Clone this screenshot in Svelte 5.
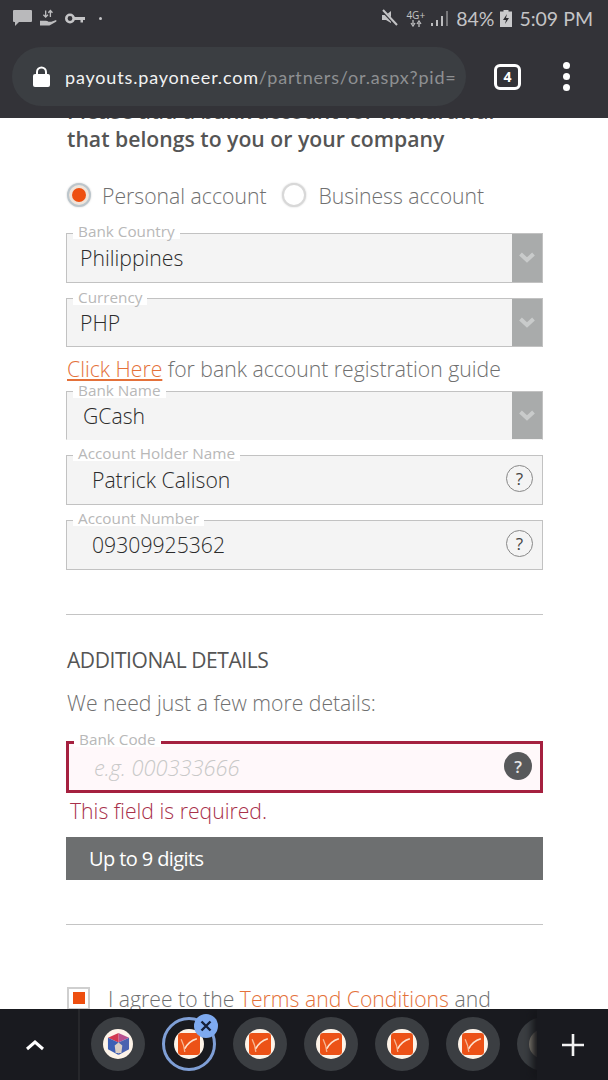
<script>
  const topFields = [
    { label: 'Bank Country', value: 'Philippines', cls: '' },
    { label: 'Currency', value: 'PHP', cls: 'short' }
  ];
  const lowerFields = [
    { label: 'Account Holder Name', value: 'Patrick Calison' },
    { label: 'Account Number', value: '09309925362' }
  ];
  const sideTabs = [0, 1, 2, 3];
</script>

{#snippet chevron()}
  <span class="chev">
    <svg width="18" height="12" viewBox="0 0 18 12"><path d="M2.5 2 L9 8 L15.5 2" fill="none" stroke="#c9cbcb" stroke-width="4"/></svg>
  </span>
{/snippet}

{#snippet payo()}
  <span class="fav">
    <svg width="22" height="22" viewBox="0 0 21 21">
      <rect width="21" height="21" rx="3" fill="#ec5217"/>
      <path d="M3 6 C5 10 6 13 6.5 18" fill="none" stroke="#f6b692" stroke-width="1.3"/>
      <path d="M6.5 15 C9 10 13 7 18 5.5" fill="none" stroke="#fde0cc" stroke-width="1.6"/>
    </svg>
  </span>
{/snippet}

<div class="app">
  <header class="top">
    <div class="status">
      <div class="st-left">
        <svg width="19" height="17" viewBox="0 0 19 17"><path d="M1 0 H18 Q19 0 19 1 V11 Q19 12 18 12 H6 L2 16 V12 H1 Q0 12 0 11 V1 Q0 0 1 0Z" fill="#b9b9bb"/></svg>
        <svg width="17" height="19" viewBox="0 0 18 19"><path d="M6 1 V8 M3.6 5.5 L6 8 L8.4 5.5 M11 8 V1 M8.8 3.4 L11 1 L13.2 3.4" fill="none" stroke="#bdbdbf" stroke-width="1.4"/><path d="M0 12 H6 Q8 12 9 13 H12 L17 11 Q18 12 17 13 L10 17 H0Z" fill="#bdbdbf"/></svg>
        <svg width="20" height="11" viewBox="0 0 20 11"><circle cx="5" cy="5.5" r="3.7" fill="none" stroke="#c4c4c6" stroke-width="2.6"/><path d="M8 4 H20 V7 H18 V9.5 H15.5 V7 H8Z" fill="#c4c4c6"/></svg>
        <span class="dot"></span>
      </div>
      <div class="st-right">
        <svg class="mute" width="18" height="18" viewBox="0 0 18 18"><path d="M2 6 H6 L11 2 V14 L6 11 H2Z" fill="#c4c4c6"/><path d="M2 1 L17 17" stroke="#333338" stroke-width="3"/><path d="M3 1 L17 16" stroke="#c4c4c6" stroke-width="2"/></svg>
        <span class="net">4G+<svg width="12" height="7" viewBox="0 0 12 7"><path d="M3 0 V4 M1 3 L3 6 L5 3 M9 7 V3 M7 4 L9 1 L11 4" stroke="#bdbdbf" stroke-width="1.3" fill="none"/></svg></span>
        <svg class="sig" width="18" height="16" viewBox="0 0 18 16"><path d="M0 13h2v3H0zM5 10h2v6H5zM10 6h2v10h-2z" fill="#bdbdbf"/><path d="M15 1h2v15h-2z" fill="#77777a"/></svg>
        <span class="pct">84%</span>
        <svg class="bat" width="12" height="17" viewBox="0 0 12 17"><path d="M3.5 0 H8.5 V1.5 H12 V17 H0 V1.5 H3.5Z" fill="#c9c9cb"/><path d="M7 4 L3 10 H6 L5 14 L9 8 H6Z" fill="#2c2c30"/></svg>
        <span class="time">5:09 PM</span>
      </div>
    </div>
    <div class="nav">
      <div class="url">
        <svg width="17" height="21" viewBox="0 0 17 21"><path d="M4 9 V6 a4.5 4.5 0 0 1 9 0 V9" fill="none" stroke="#fff" stroke-width="2"/><rect y="8" width="17" height="13" rx="2" fill="#fff"/></svg>
        <span class="addr"><b>payouts.payoneer.com</b>/partners/or.aspx?pid=</span>
      </div>
      <span class="count">4</span>
      <span class="menu"><i></i><i></i><i></i></span>
    </div>
  </header>

  <main class="page">
    <h2>Please add a bank account for withdrawal<br />that belongs to you or your company</h2>

    <div class="radios">
      <span class="radio on"><i></i></span><span class="rlabel">Personal account</span>
      <span class="radio"></span><span class="rlabel">Business account</span>
    </div>

    {#each topFields as f}
      <div class="field select {f.cls}">
        <span class="legend">{f.label}</span>
        <span class="value">{f.value}</span>
        {@render chevron()}
      </div>
    {/each}

    <p class="guide"><a href="#guide">Click Here</a> for bank account registration guide</p>

    <div class="field select noline">
      <span class="legend">Bank Name</span>
      <span class="value gcash">GCash</span>
      {@render chevron()}
    </div>

    {#each lowerFields as f}
      <div class="field">
        <span class="legend">{f.label}</span>
        <span class="value inset">{f.value}</span>
        <span class="help">?</span>
      </div>
    {/each}

    <hr class="rule-a" />

    <h3>ADDITIONAL DETAILS</h3>
    <p class="lead">We need just a few more details:</p>

    <div class="field error">
      <span class="legend">Bank Code</span>
      <span class="placeholder">e.g. 000333666</span>
      <span class="help solid">?</span>
    </div>
    <p class="errmsg">This field is required.</p>
    <div class="hint">Up to 9 digits</div>

    <hr class="rule-b" />

    <div class="agree">
      <span class="check"><i></i></span>
      <span>I agree to the <a href="#terms">Terms and Conditions</a> and</span>
    </div>
  </main>

  <footer class="tabs">
    <div class="up">
      <svg width="20" height="12" viewBox="0 0 20 12"><path d="M2 10 L10 3 L18 10" fill="none" stroke="#fff" stroke-width="3"/></svg>
    </div>
    <div class="strip">
      <span class="tab">
        <span class="fav-wrap">
          <svg width="23" height="24" viewBox="0 0 24 25">
            <path d="M12 1 L23 6 L12 11 Z" fill="#b8508f"/>
            <path d="M12 1 L1 6 L12 11 Z" fill="#d2384f"/>
            <path d="M1 6 L12 11 V24 L1 18Z" fill="#3d5fb5"/>
            <path d="M23 6 L12 11 V24 L23 18Z" fill="#4a62b0"/>
            <path d="M8 14 L12 11 L16 14 L15 22 H9Z" fill="#dccfc4"/>
          </svg>
        </span>
      </span>
      <span class="tab current">
        <span class="fav-wrap">{@render payo()}</span>
        <span class="close">
          <svg width="12" height="12" viewBox="0 0 12 12"><path d="M1.5 1.5 L10.5 10.5 M10.5 1.5 L1.5 10.5" stroke="#16213a" stroke-width="2.4"/></svg>
        </span>
      </span>
      {#each sideTabs as t}
        <span class="tab"><span class="fav-wrap">{@render payo()}</span></span>
      {/each}
      <span class="tab"><span class="fav-wrap muted"></span></span>
    </div>
    <div class="plus">
      <svg width="22" height="22" viewBox="0 0 22 22"><path d="M11 0 V22 M0 11 H22" stroke="#f2f2f2" stroke-width="2.6"/></svg>
    </div>
  </footer>
</div>

<style>
  :global(body) { margin: 0; background: #fff; }
  .app {
    width: 608px; height: 1080px; display: flex; flex-direction: column; overflow: hidden;
    font-family: "Open Sans", "Liberation Sans", sans-serif; color: #707070;
  }

  .top { height: 118px; flex: none; background: #333338; color: #c4c4c6; position: relative; z-index: 1; }
  .status { height: 36px; display: flex; justify-content: space-between; align-items: center; padding: 0 15px 0 13px; }
  .st-left { display: flex; align-items: center; gap: 8px; }
  .dot { width: 3px; height: 3px; border-radius: 50%; background: #c4c4c6; margin-left: 6px; }
  .st-right { display: flex; align-items: center; font-family: "Lato", sans-serif; }
  .net { display: flex; flex-direction: column; align-items: center; font-size: 10px; line-height: 10px; margin: 0 6px 0 8px; font-family: "Open Sans", sans-serif; }
  .pct { font-size: 19.5px; margin: 0 6px 0 7px; }
  .time { font-size: 19.5px; margin-left: 7px; }

  .nav { display: flex; align-items: center; padding: 11px 0 0 12px; }
  .url {
    width: 454px; height: 59px; box-sizing: border-box; border-radius: 30px; background: #3b3e42;
    display: flex; align-items: center; gap: 15px; padding-left: 21px;
  }
  .addr { font-family: "Lato", sans-serif; font-size: 18px; letter-spacing: 0.83px; color: #8e9092; white-space: nowrap; }
  .addr b { font-weight: 400; color: #f2f2f2; }
  .count {
    width: 27px; height: 26px; box-sizing: border-box; margin-left: 28px; border: 3px solid #fff; border-radius: 6px;
    display: flex; align-items: center; justify-content: center; color: #fff; font-size: 14px; font-weight: 700;
  }
  .menu { display: flex; flex-direction: column; gap: 4px; margin-left: 42px; }
  .menu i { width: 7px; height: 7px; border-radius: 50%; background: #fff; }

  .page { flex: 1; min-height: 0; overflow: hidden; padding: 0 65px 0 66px; font-weight: 300; }
  h2 { margin: -21px 0 0 1px; font-size: 21.2px; line-height: 28px; font-weight: 600; color: #555; }

  .radios { display: flex; align-items: center; height: 28px; margin-top: 28px; font-size: 21.2px; }
  .radio {
    width: 24px; height: 24px; border-radius: 50%; background: #fff; border: 2px solid #d8d8d8;
    box-sizing: border-box; display: flex; align-items: center; justify-content: center; margin-left: 1px;
    box-shadow: 0 0 2px #ccc;
  }
  .radio.on { background: #f0e4da; border-color: #bcc6cc; }
  .radio i { width: 14px; height: 14px; border-radius: 50%; background: #ee4f10; }
  .rlabel { margin: 0 15px 0 11px; }
  .radio + .rlabel + .radio + .rlabel { margin-left: 12px; }

  .field {
    position: relative; height: 50px; box-sizing: border-box; margin-top: 15px;
    background: #f4f4f4; border: 1px solid #c2c2c2; display: flex; align-items: center;
    font-size: 21.2px; color: #2b2b2b;
  }
  .field.short { height: 49px; }
  .radios + .field { margin-top: 24px; }
  .legend {
    position: absolute; left: 6px; top: -11.5px; padding: 0 5px; background: #fff;
    font-size: 15.3px; line-height: 16px; color: #b8b8b8; font-weight: 400; white-space: nowrap;
  }
  .short .legend, .noline .legend { top: -10.5px; }
  .value { padding-left: 13px; margin-bottom: 2px; }
  .short .value, .noline .value { margin-bottom: 0; }
  .value.gcash { padding-left: 16px; }
  .value.inset { padding-left: 25px; }
  .select.noline { height: 49px; margin-top: 0; border-bottom-color: transparent; }
  .chev {
    margin-left: auto; align-self: stretch; width: 30px; background: #a9abab;
    display: flex; align-items: center; justify-content: center;
  }
  .help {
    margin-left: auto; margin-right: 9px; margin-bottom: 3px; width: 27px; height: 27px; box-sizing: border-box;
    border: 1px solid #888; border-radius: 50%; display: flex; align-items: center; justify-content: center;
    font-size: 17px; font-weight: 400; color: #444;
  }
  .help.solid { background: #58595b; border: 0; color: #e6e6e6; width: 28px; height: 28px; font-weight: 600; margin-right: 8px; margin-bottom: 2px; }

  .guide { margin: 10px 0; height: 24px; line-height: 24px; font-size: 21.2px; white-space: nowrap; padding-left: 1px; }
  a { color: #e4713a; text-decoration: underline; text-underline-offset: 2px; }

  hr { border: 0; height: 1px; background: #c4c4c4; margin: 0; }
  .rule-a { margin-top: 44px; }
  .rule-b { margin-top: 44px; }
  h3 { margin: 30px 0 0 1px; font-size: 21px; line-height: 30px; font-weight: 400; color: #555; letter-spacing: -0.42px; }
  .lead { margin: 13px 0 0 1px; font-size: 21.2px; line-height: 30px; }

  .field.error { height: 52px; margin-top: 23px; background: #fff8fa; border: 3px solid #a5203f; }
  .field.error .legend { left: 5px; top: -13.5px; }
  .placeholder { padding-left: 25px; font-style: italic; color: #c8c8c8; font-size: 21.8px; }
  .errmsg { margin: 4px 0 0 4px; font-size: 21.2px; line-height: 28px; color: #a8304a; }
  .hint {
    margin-top: 12px; height: 43px; background: #6d6f70; color: #fff; font-size: 20px; font-weight: 400;
    letter-spacing: -0.6px; display: flex; align-items: center; padding-left: 23px;
  }

  .agree { display: flex; align-items: center; gap: 18px; margin-top: 61px; font-size: 21.2px; white-space: nowrap; height: 24px; margin-left: 1px; }
  .check {
    width: 23px; height: 23px; box-sizing: border-box; border: 2px solid #cfcfcf; display: flex;
    align-items: center; justify-content: center; flex: none;
  }
  .check i { width: 12px; height: 12px; background: #ee4f10; }

  .tabs { height: 71px; flex: none; background: #191a1f; display: flex; align-items: center; position: relative; overflow: hidden; }
  .up { width: 80px; align-self: stretch; flex: none; display: flex; align-items: center; justify-content: center; padding-right: 8px; box-sizing: border-box; border-right: 2px solid #26272b; }
  .strip { flex: 1; min-width: 0; display: flex; align-items: center; gap: 17px; padding-left: 11px; margin-top: -2px; align-self: stretch; }
  .tab {
    position: relative; width: 54px; height: 54px; flex: none; border-radius: 50%; background: #3b3e42;
    display: flex; align-items: center; justify-content: center; box-sizing: border-box;
  }
  .tab.current { background: transparent; border: 3px solid #7f9fd6; }
  .fav-wrap { width: 30px; height: 30px; border-radius: 50%; background: #fdf3e8; display: flex; align-items: center; justify-content: center; overflow: hidden; }
  .fav-wrap.muted { background: #8a8378; }
  .fav { display: flex; }
  .close {
    position: absolute; top: -6px; right: -5px; width: 24px; height: 24px; border-radius: 50%;
    background: #7eaaf0; display: flex; align-items: center; justify-content: center;
  }
  .plus {
    position: absolute; right: 0; top: 0; bottom: 0; width: 71px; background: #191a1f;
    display: flex; align-items: center; justify-content: center; box-shadow: -5px 0 8px #15161a;
  }
</style>
